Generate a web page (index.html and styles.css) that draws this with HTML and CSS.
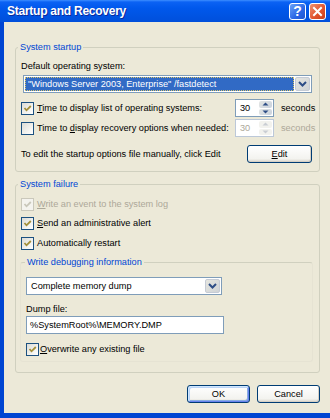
FILE: index.html
```html
<!DOCTYPE html>
<html>
<head>
<meta charset="utf-8">
<link rel="stylesheet" href="styles.css">
</head>
<body>
<div class="window">
  <div class="titlebar">
    <span class="title">Startup and Recovery</span>
    <div class="tbtns">
      <div class="tbtn help">?</div>
      <div class="tbtn close">
        <svg width="11" height="11" viewBox="0 0 11 11"><path d="M2 2 L9 9 M9 2 L2 9" stroke="#fff" stroke-width="2" stroke-linecap="square"/></svg>
      </div>
    </div>
  </div>
  <div class="client">
    <fieldset class="group">
      <legend>System startup</legend>
      <div class="gbody g1">
        <div class="lbl">Default operating system:</div>
        <div class="combo wide">
          <div class="field selected"><span class="focus">"Windows Server 2003, Enterprise" /fastdetect</span></div>
          <div class="dd"><svg width="9" height="6" viewBox="0 0 9 6"><path d="M1 1 L4.5 4.5 L8 1" fill="none" stroke="#2D4D86" stroke-width="2"/></svg></div>
        </div>
        <div class="srow first">
          <div class="cb on"><svg width="11" height="11" viewBox="0 0 11 11"><path d="M2.5 5 L4.5 7.3 L8.8 3" fill="none" stroke="#A4903A" stroke-width="1.8"/></svg></div>
          <span class="slbl"><u>T</u>ime to display list of operating systems:</span>
          <div class="spin"><span class="sval">30</span><div class="sbtns"><div class="sb"><svg width="7" height="4" viewBox="0 0 7 4"><path d="M0.5 3.5 L3.5 0.5 L6.5 3.5Z" fill="#2D4D86"/></svg></div><div class="sb"><svg width="7" height="4" viewBox="0 0 7 4"><path d="M0.5 0.5 L3.5 3.5 L6.5 0.5Z" fill="#2D4D86"/></svg></div></div></div>
          <span class="secs">seconds</span>
        </div>
        <div class="srow second">
          <div class="cb"></div>
          <span class="slbl">Time to <u>d</u>isplay recovery options when needed:</span>
          <div class="spin dis"><span class="sval">30</span><div class="sbtns"><div class="sb"><svg width="7" height="4" viewBox="0 0 7 4"><path d="M0.5 3.5 L3.5 0.5 L6.5 3.5Z" fill="#C9CDD3"/></svg></div><div class="sb"><svg width="7" height="4" viewBox="0 0 7 4"><path d="M0.5 0.5 L3.5 3.5 L6.5 0.5Z" fill="#C9CDD3"/></svg></div></div></div>
          <span class="secs dtext">seconds</span>
        </div>
        <div class="editrow">
          <span>To edit the startup options file manually, click Edit</span>
          <button class="btn edit"><u>E</u>dit</button>
        </div>
      </div>
    </fieldset>

    <fieldset class="group g2box">
      <legend>System failure</legend>
      <div class="gbody g2">
        <div class="crow r1">
          <div class="cb dis"><svg width="11" height="11" viewBox="0 0 11 11"><path d="M2.5 5 L4.5 7.3 L8.8 3" fill="none" stroke="#C9C7BA" stroke-width="1.8"/></svg></div>
          <span class="dtext"><u>W</u>rite an event to the system log</span>
        </div>
        <div class="crow r2">
          <div class="cb on"><svg width="11" height="11" viewBox="0 0 11 11"><path d="M2.5 5 L4.5 7.3 L8.8 3" fill="none" stroke="#A4903A" stroke-width="1.8"/></svg></div>
          <span><u>S</u>end an administrative alert</span>
        </div>
        <div class="crow r3">
          <div class="cb on"><svg width="11" height="11" viewBox="0 0 11 11"><path d="M2.5 5 L4.5 7.3 L8.8 3" fill="none" stroke="#A4903A" stroke-width="1.8"/></svg></div>
          <span>Automatically restart</span>
        </div>
        <fieldset class="inner">
          <legend>Write debugging information</legend>
          <div class="ibody">
            <div class="combo narrow">
              <div class="field">Complete memory dump</div>
              <div class="dd"><svg width="9" height="6" viewBox="0 0 9 6"><path d="M1 1 L4.5 4.5 L8 1" fill="none" stroke="#2D4D86" stroke-width="2"/></svg></div>
            </div>
            <div class="lbl dump">Dump file:</div>
            <div class="textbox">%SystemRoot%\MEMORY.DMP</div>
            <div class="crow r4">
              <div class="cb on"><svg width="11" height="11" viewBox="0 0 11 11"><path d="M2.5 5 L4.5 7.3 L8.8 3" fill="none" stroke="#A4903A" stroke-width="1.8"/></svg></div>
              <span class="tight"><u>O</u>verwrite any existing file</span>
            </div>
          </div>
        </fieldset>
      </div>
    </fieldset>

    <div class="buttons">
      <button class="btn default">OK</button>
      <button class="btn">Cancel</button>
    </div>
  </div>
</div>
</body>
</html>
```
FILE: styles.css
```css
* { box-sizing: border-box; }
body {
  margin: 0;
  width: 330px;
  height: 418px;
  overflow: hidden;
  font-family: "Liberation Sans", Arial, sans-serif;
  font-size: 9.2px;
  color: #000;
}
u { text-decoration: underline; text-underline-offset: 1px; }
.window {
  width: 330px;
  height: 418px;
  display: flex;
  flex-direction: column;
  background: #0045D2;
}
.titlebar {
  height: 22px;
  flex: none;
  display: flex;
  align-items: center;
  padding: 0 4px 0 7px;
  background: linear-gradient(to bottom, #3D8EFF 0px, #0B62F4 2px, #0058EC 8px, #0054E3 15px, #004FDB 22px);
}
.title {
  flex: 1;
  color: #fff;
  font-weight: bold;
  font-size: 12px;
  letter-spacing: -0.25px;
  text-shadow: 1px 1px 0 #0A2A9C;
}
.tbtns { display: flex; gap: 3px; }
.tbtn {
  width: 17px;
  height: 17px;
  border: 1px solid #fff;
  border-radius: 3px;
  display: flex;
  align-items: center;
  justify-content: center;
}
.help {
  background: linear-gradient(135deg, #6AA2F8, #2A66E6 60%, #1F55D0);
  color: #fff;
  font-weight: bold;
  font-size: 14px;
  line-height: 15px;
}
.close { background: linear-gradient(135deg, #F09272, #E0522C 60%, #C43E1C); }

.client {
  flex: 1;
  margin: 0 0 5px 4px;
  background: #ECE9D8;
  padding: 20px 10px 0 11px;
}
.group {
  margin: 0;
  padding: 0;
  min-width: 0;
  border: 1px solid #D0D0BF;
  border-radius: 3px;
}
.group > legend, .inner > legend {
  color: #0046D5;
  line-height: 11px;
  height: 11px;
  padding: 0 2px;
  margin-left: 2px;
}
.g2box { margin-top: 7px; }
.gbody { padding: 0 7px 0 5px; }
.g1 { padding-top: 7px; padding-bottom: 8px; }
.g2 { padding-bottom: 10px; }
.lbl { line-height: 12px; height: 12px; white-space: nowrap; }

.combo {
  height: 18px;
  border: 1px solid #7F9DB9;
  background: #fff;
  display: flex;
  padding: 1px;
}
.combo.wide { margin-top: 3px; margin-left: 2px; width: 289px; }
.combo.narrow { width: 196px; }
.field {
  flex: 1;
  line-height: 14px;
  padding-left: 3px;
  white-space: nowrap;
  overflow: hidden;
}
.field.selected {
  background: #316AC5;
  color: #fff;
  padding: 0;
}
.focus {
  display: block;
  height: 14px;
  border: 1px dotted #D9C46A;
  padding-left: 2px;
  line-height: 12px;
}
.dd {
  width: 15px;
  height: 14px;
  margin-left: 1px;
  border-radius: 2px;
  background: linear-gradient(135deg, #E6E6E0, #CFD3D6);
  border: 1px solid #C5CBD5;
  display: flex;
  align-items: center;
  justify-content: center;
}

.srow {
  height: 18px;
  display: flex;
  align-items: center;
}
.srow.first { margin-top: 6px; }
.srow.second { margin-top: 2px; }
.cb {
  width: 13px;
  height: 13px;
  flex: none;
  border: 1px solid #1C5180;
  background: linear-gradient(135deg, #DCDCD5, #F6F6F3 70%, #FFFFFF);
  display: flex;
  align-items: center;
  justify-content: center;
}
.cb.dis { border-color: #CAC8BB; background: #F4F3EE; }
.slbl { width: 198px; margin-left: 3px; white-space: nowrap; }
.spin {
  width: 39px;
  height: 18px;
  border: 1px solid #7F9DB9;
  background: #fff;
  display: flex;
  padding: 1px;
}
.spin.dis { border-color: #BCC8D8; color: #ACA899; }
.sval { flex: 1; line-height: 14px; padding-left: 3px; }
.sbtns { width: 13px; display: flex; flex-direction: column; gap: 1px; }
.sb {
  flex: 1;
  border-radius: 2px;
  background: linear-gradient(135deg, #E4E6E4, #C9D2DD);
  display: flex;
  align-items: center;
  justify-content: center;
}
.spin.dis .sb { background: #F2F2EE; }
.secs { margin-left: 7px; width: 30px; white-space: nowrap; }
.dtext { color: #ACA899; }

.editrow {
  margin-top: 8px;
  display: flex;
  justify-content: space-between;
  align-items: center;
  white-space: nowrap;
}
.btn {
  font-family: inherit;
  font-size: 9.2px;
  color: #000;
  height: 18px;
  width: 63px;
  padding: 0;
  border: 1px solid #003C74;
  border-radius: 3px;
  background: linear-gradient(to bottom, #FFFFFF, #F3F3EF 80%, #D8D3C8);
  box-shadow: inset -1px -1px 0 #D6D0C5;
}
.btn.edit { width: 65px; }
.btn.default { box-shadow: inset 1px 1px 0 #CEE7FF, inset -1px -1px 0 #6982EE, inset 2px 2px 0 #BCD4F6, inset -2px -2px 0 #89ADE4; }

.crow {
  height: 13px;
  line-height: 13px;
  display: flex;
  align-items: center;
  white-space: nowrap;
}
.crow span { margin-left: 3px; }
.crow span.tight { margin-left: 1px; }
.r1 { margin-top: 8px; }
.r2 { margin-top: 6px; }
.r3 { margin-top: 7px; }
.inner {
  margin: 7px -1px 0 -1px;
  padding: 0;
  min-width: 0;
  border: 1px solid #E6E3D3;
  border-top-color: #D0D0BF;
  border-radius: 3px;
}
.inner > legend { margin-left: 4px; }
.ibody { padding: 9px 5px 5px 5px; }
.dump { margin-top: 8px; }
.textbox {
  margin-top: 1px;
  width: 198px;
  height: 18px;
  border: 1px solid #7F9DB9;
  background: #fff;
  line-height: 16px;
  padding-left: 3px;
  white-space: nowrap;
}
.r4 { margin-top: 9px; }

.buttons {
  margin-top: 12px;
  display: flex;
  justify-content: flex-end;
  gap: 7px;
}
```
